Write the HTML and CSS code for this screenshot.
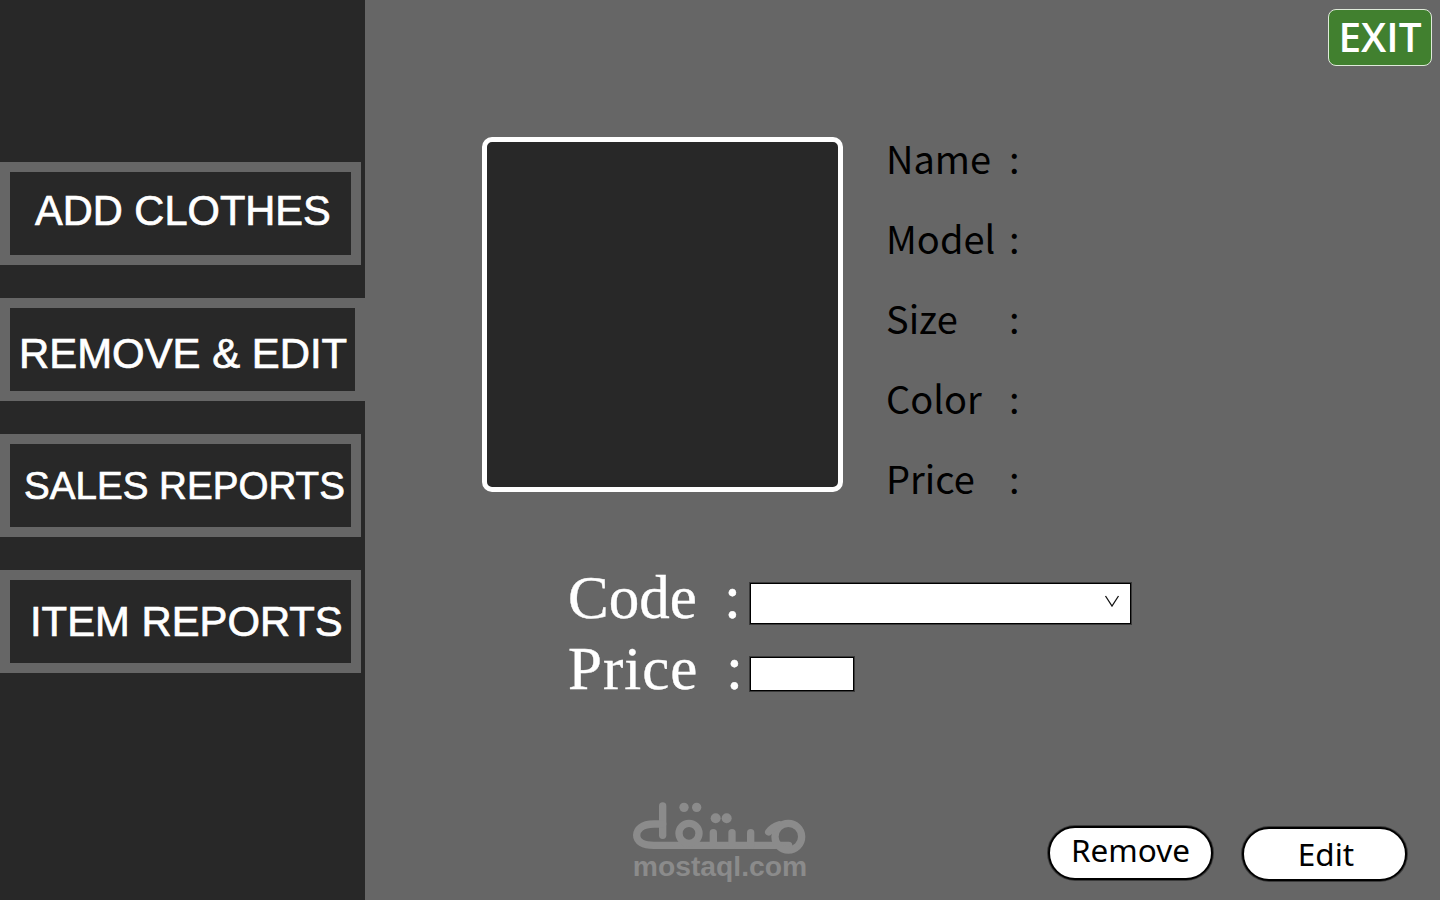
FILE: index.html
```html
<!DOCTYPE html>
<html lang="en">
<head>
<meta charset="utf-8">
<title>Remove &amp; Edit</title>
<link rel="stylesheet" href="styles.css">
</head>
<body>
<div class="app">
  <nav class="sidebar">
    <div class="menu-item"><div class="menu-inner menu-add">ADD CLOTHES</div></div>
    <div class="menu-item menu-item-active"><div class="menu-inner menu-remove">REMOVE &amp; EDIT</div></div>
    <div class="menu-item"><div class="menu-inner menu-sales">SALES REPORTS</div></div>
    <div class="menu-item"><div class="menu-inner menu-reports">ITEM REPORTS</div></div>
  </nav>
  <main class="main">
    <div class="topbar"><button class="exit">EXIT</button></div>
    <section class="details">
      <div class="photo"></div>
      <dl class="info">
        <dt>Name</dt><dd>:</dd>
        <dt>Model</dt><dd>:</dd>
        <dt>Size</dt><dd>:</dd>
        <dt>Color</dt><dd>:</dd>
        <dt>Price</dt><dd>:</dd>
      </dl>
    </section>
    <section class="form">
      <div class="form-row row-code">
        <span class="form-label">Code</span><span class="form-colon">:</span>
        <div class="select">
          <svg class="chevron" width="16" height="12" viewBox="0 0 16 12"><path d="M1.5 1 8 11 14.5 1" fill="none" stroke="#111" stroke-width="1.3"/></svg>
        </div>
      </div>
      <div class="form-row row-price">
        <span class="form-label label-price">Price</span><span class="form-colon colon-price">:</span>
        <div class="input"></div>
      </div>
    </section>
    <section class="actions">
      <button class="pill pill-remove">Remove</button>
      <button class="pill pill-edit"><span class="edit-text">Edit</span></button>
    </section>
    <div class="watermark">
      <svg class="watermark-logo" width="176" height="52" viewBox="0 0 528 156" aria-hidden="true">
        <g fill="none" stroke="#8b8b8b" stroke-width="22" stroke-linecap="round" stroke-linejoin="round">
          <path d="M92 12V100"/>
          <path d="M92 66H66C28 66 14 84 14 100C14 118 32 130 66 130H470"/>
          <circle cx="171" cy="94" r="30"/>
          <path d="M244 130V92"/>
          <path d="M300 130V92"/>
          <path d="M356 130V92"/>
          <circle cx="469" cy="104" r="40"/>
          <path d="M410 90C418 78 428 72 442 68"/>
        </g>
        <g fill="#8b8b8b">
          <circle cx="156" cy="16" r="14"/><circle cx="194" cy="16" r="14"/>
          <circle cx="251" cy="49" r="15"/><circle cx="284" cy="49" r="15"/>
        </g>
      </svg>
      <div class="watermark-text">mostaql.com</div>
    </div>
  </main>
</div>
</body>
</html>
```
FILE: styles.css
```css
* { box-sizing: border-box; }
html, body { margin: 0; padding: 0; }
body { width: 1440px; height: 900px; overflow: hidden; background: #666; }
.app { display: flex; width: 1440px; height: 900px; }

.sidebar {
  width: 365px; height: 900px; background: #282828; padding-top: 162px;
  display: flex; flex-direction: column; gap: 33px; flex: none;
}
.menu-item { width: 361px; height: 103px; background: #666; padding: 10px; }
.menu-item-active { width: 365px; padding-right: 10px; }
.menu-inner {
  height: 83px; background: #282828; color: #fff;
  font-family: "Liberation Sans", Arial, sans-serif;
  display: flex; white-space: nowrap;
  -webkit-text-stroke: 0.7px #fff;
}
.menu-add { font-size: 41.6px; line-height: 78px; padding-left: 25px; }
.menu-remove { font-size: 41.9px; line-height: 92px; padding-left: 9px; }
.menu-sales { font-size: 38.6px; line-height: 84px; padding-left: 14px; }
.menu-reports { font-size: 41.8px; line-height: 84px; padding-left: 20px; }

.main { position: relative; flex: 1; height: 900px; }
.topbar { display: flex; justify-content: flex-end; padding: 9px 8px 0 0; }
.exit {
  width: 104px; height: 57px; padding: 0 0 2px; background: #41802f; color: #fff;
  border: 1.5px solid #dfeada; border-radius: 8px;
  font-family: "Open Sans", sans-serif; font-weight: 600; font-size: 40.5px; line-height: 52px;
}
.details { display: flex; margin: 54px 0 0 117px; gap: 43px; align-items: flex-start; }
.photo {
  width: 361px; height: 355px; margin-top: 17px;
  background: #282828; border: 5px solid #fff; border-radius: 10px;
}
.info {
  margin: -2px 0 0; display: grid; grid-template-columns: 123px auto; grid-auto-rows: 80px;
  font-family: "Noto Sans CJK JP", "Noto Sans", sans-serif; font-size: 38px; line-height: 80px; color: #000;
}
.info dt, .info dd { margin: 0; }

.form { margin: 64px 0 0 203px; }
.form-row { display: flex; align-items: flex-start; color: #fff; font-family: "Liberation Serif", serif; font-size: 61px; -webkit-text-stroke: 0.4px #fff; }
.row-code { height: 43px; margin-bottom: 31px; }
.row-price { height: 36px; }
.form-label { width: 156px; flex: none; line-height: 43px; margin-top: -6px; }
.form-colon { width: 25px; flex: none; line-height: 43px; margin-top: -6px; }
.label-price { letter-spacing: 1px; line-height: 36px; margin-top: -5px; width: 158px; }
.colon-price { width: 23px; line-height: 36px; margin-top: -5px; }
.select {
  position: relative; width: 381px; height: 41px; margin: 1px 0 0 1px; background: #fff;
  border: 1.5px solid #000; box-shadow: 0 0 0 1px #3a3a3a;
}
.chevron { position: absolute; right: 10px; top: 11px; }
.input {
  width: 104px; height: 34px; margin: 1px 0 0 1px; background: #fff;
  border: 1.5px solid #000; box-shadow: 0 0 0 1px #3a3a3a;
}

.actions { display: flex; justify-content: flex-end; gap: 29px; margin: 134px 33px 0 0; align-items: flex-start; }
.pill {
  width: 165px; height: 54px; padding: 0; background: #fff; color: #000;
  border: 2px solid #000; border-radius: 27px; box-shadow: 0 0 0 1px #3a3a3a;
  font-family: "Noto Sans", sans-serif; font-size: 31.5px; line-height: 44px;
}
.pill-remove { padding-bottom: 6px; }
.pill-edit { margin-top: 1px; }
.edit-text { display: inline-block; margin-left: 3px; }

.watermark { position: absolute; left: 267px; top: 802px; width: 176px; color: #8b8b8b; text-align: center; }
.watermark-logo { display: block; }
.watermark-text { font-family: "Liberation Sans", sans-serif; font-weight: 700; font-size: 28.3px; line-height: 24px; white-space: nowrap; }
```
